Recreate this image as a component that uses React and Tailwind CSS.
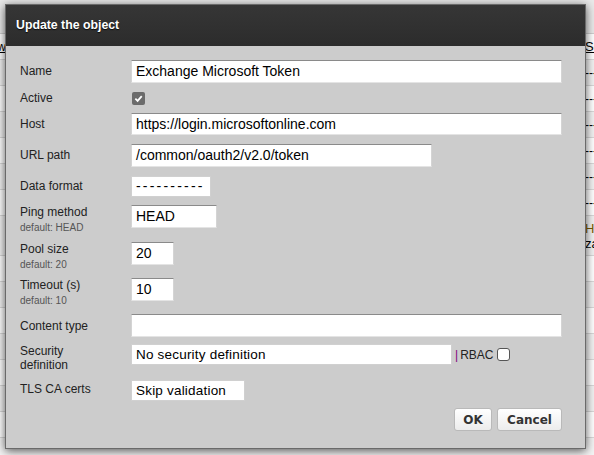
import React from 'react';

const sans = { fontFamily: '"Liberation Sans", Arial, sans-serif' };

function Field({ label, sub, top, children, labelPad = 'pt-[4px]' }) {
  return (
    <div className={`flex items-start ${top}`}>
      <div className={`w-[111px] shrink-0 text-[12px] leading-[14px] text-[#222] ${labelPad}`}>
        <div>{label}</div>
        {sub && <div className="text-[10px] leading-[12px] text-[#555] mt-[3px]">{sub}</div>}
      </div>
      {children}
    </div>
  );
}

function TextBox({ value, w, h = 'h-[22px]' }) {
  return (
    <div
      className={`${w} ${h} bg-white border-t border-t-[#8a8a8a] border-x border-x-[#d4d4d4] border-b border-b-[#e4e4e4] pl-[4px] text-[14px] leading-[20px] text-black whitespace-nowrap overflow-hidden`}
    >
      {value}
    </div>
  );
}

function BgRow({ shade, right, left, h = 'h-[26px]' }) {
  return (
    <div className={`flex ${h} ${shade} border-b border-[#d8d8d8] text-[12px] items-center`}>
      <div className="w-[6px] flex justify-end overflow-hidden whitespace-nowrap">{left}</div>
      <div className="flex-1" />
      <div className="w-[10px] overflow-hidden whitespace-nowrap pl-[1px]">{right}</div>
    </div>
  );
}

export default function App() {
  return (
    <div className="relative w-[594px] h-[455px] overflow-hidden bg-[#f4f4f4]" style={sans}>
      {/* page behind the dialog */}
      <div className="flex flex-col">
        <div className="h-[34px] bg-[#e9e9e9] border-b border-[#cfcfcf]" />
        <BgRow
          shade="bg-white"
          left={<span className="underline">View</span>}
          right={<span className="underline text-[13px]">Se</span>}
        />
        <BgRow shade="bg-[#f2f2f2]" right="----" />
        <BgRow shade="bg-white" right="----" />
        <BgRow shade="bg-[#f2f2f2]" right="----" />
        <BgRow shade="bg-white" right="----" />
        <BgRow shade="bg-[#f2f2f2]" right="----" />
        <BgRow shade="bg-white" right="----" />
        <BgRow
          shade="bg-[#f2f2f2]"
          h="h-[40px]"
          right={
            <div className="leading-[15px] text-[13px]">
              <div className="text-[#7a5a00]">HT</div>
              <div>za</div>
            </div>
          }
        />
        <BgRow shade="bg-white" />
        <BgRow shade="bg-[#f2f2f2]" />
        <BgRow shade="bg-white" />
        <BgRow shade="bg-[#f2f2f2]" />
        <BgRow shade="bg-white" />
        <BgRow shade="bg-[#f2f2f2]" />
        <BgRow shade="bg-white" />
      </div>

      {/* dialog */}
      <div className="absolute left-[5px] top-[4px] w-[581px] h-[445px] flex flex-col bg-[#cccccc] border border-[#6a6a6a] shadow-[0_2px_9px_rgba(0,0,0,0.65)]">
        <div className="h-[41px] shrink-0 bg-gradient-to-b from-[#363636] to-[#2c2c2c] flex items-center pl-[10px]">
          <span className="text-white font-bold text-[12.3px] [text-shadow:0_1px_1px_rgba(0,0,0,0.8)]">
            Update the object
          </span>
        </div>

        <div className="flex flex-col pl-[14px] pr-[23px] pt-[14px]">
          <Field label="Name" top="">
            <TextBox value="Exchange Microsoft Token" w="w-[431px]" h="h-[23px]" />
          </Field>

          <Field label="Active" top="mt-[5px]" labelPad="pt-[3px]">
            <div className="h-[20px] flex items-center pl-[1px]">
              <div className="w-[13px] h-[13px] rounded-[2px] bg-[#6b6b6b] flex items-center justify-center">
                <svg width="9" height="9" viewBox="0 0 10 10">
                  <path d="M1.5 5.2 L4 7.6 L8.6 2.4" stroke="white" strokeWidth="2" fill="none" />
                </svg>
              </div>
            </div>
          </Field>

          <Field label="Host" top="mt-[5px]">
            <TextBox value="https://login.microsoftonline.com" w="w-[431px]" />
          </Field>

          <Field label="URL path" top="mt-[9px]">
            <TextBox value="/common/oauth2/v2.0/token" w="w-[301px]" h="h-[23px]" />
          </Field>

          <Field label="Data format" top="mt-[9px]" labelPad="pt-[3px]">
            <div className="w-[80px] h-[21px] bg-white border border-[#d0d0d0] pl-[4px] text-[14px] leading-[19px] tracking-[2.2px]">
              ----------
            </div>
          </Field>

          <Field label="Ping method" sub="default: HEAD" top="mt-[8px]" labelPad="pt-[0px]">
            <TextBox value="HEAD" w="w-[86px]" h="h-[23px]" />
          </Field>

          <Field label="Pool size" sub="default: 20" top="mt-[8px]" labelPad="pt-[0px]">
            <TextBox value="20" w="w-[43px]" h="h-[23px]" />
          </Field>

          <Field label="Timeout (s)" sub="default: 10" top="mt-[7px]" labelPad="pt-[0px]">
            <TextBox value="10" w="w-[43px]" h="h-[23px]" />
          </Field>

          <Field label="Content type" top="mt-[7px]" labelPad="pt-[5px]">
            <TextBox value="" w="w-[431px]" h="h-[23px]" />
          </Field>

          <Field label="Security definition" top="mt-[7px]" labelPad="pt-[0px] pr-[50px]">
            <div className="flex items-center">
              <div className="w-[321px] h-[21px] bg-white border border-[#d0d0d0] pl-[4px] text-[13.5px] leading-[19px] tracking-[0.2px]">
                No security definition
              </div>
              <span className="ml-[3px] text-[12px] text-[#800080]">|</span>
              <span className="ml-[2px] text-[12px] text-[#222]">RBAC</span>
              <div className="ml-[4px] w-[13px] h-[13px] bg-white border border-[#555] rounded-[3px]" />
            </div>
          </Field>

          <Field label="TLS CA certs" top="mt-[8px]" labelPad="pt-[2px]">
            <div className="w-[114px] h-[21px] bg-white border border-[#d0d0d0] pl-[4px] text-[13.5px] leading-[19px] tracking-[0.2px]">
              Skip validation
            </div>
          </Field>

          <div className="flex justify-end gap-[5px] mt-[7px]">
            <button
              className="w-[38px] h-[23px] rounded-[3px] border border-[#b9b9b9] bg-gradient-to-b from-white to-[#ececec] text-[12px] font-bold text-[#333]"
              style={{ fontFamily: '"DejaVu Sans", Verdana, sans-serif' }}
            >
              OK
            </button>
            <button
              className="w-[65px] h-[23px] rounded-[3px] border border-[#b9b9b9] bg-gradient-to-b from-white to-[#ececec] text-[12px] font-bold text-[#333]"
              style={{ fontFamily: '"DejaVu Sans", Verdana, sans-serif' }}
            >
              Cancel
            </button>
          </div>
        </div>
      </div>
    </div>
  );
}
